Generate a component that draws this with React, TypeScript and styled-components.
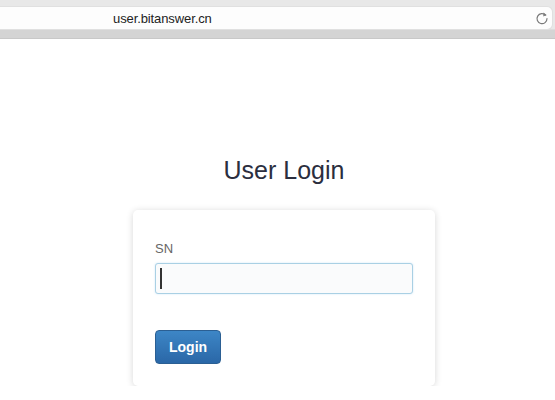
import React, { FC } from 'react'
import styled, { createGlobalStyle } from 'styled-components'

const GlobalStyle = createGlobalStyle`
    html, body {
        margin: 0;
        padding: 0;
        background: #ffffff;
        font-family: 'Liberation Sans', Arial, sans-serif;
    }
`

const Toolbar = styled.div`
    height: 29px;
    background: #e8e8e8;
    padding-top: 7px;
    box-sizing: border-box;
    display: flex;
`

const AddressField = styled.div`
    flex: 1;
    height: 22px;
    margin-left: -10px;
    margin-right: 3px;
    background: #fdfdfd;
    border-radius: 5px;
    box-shadow: 0 0 0 1px #e0e0e0;
    display: flex;
    align-items: center;
    position: relative;

    .url {
        margin-left: 123px;
        font-size: 13px;
        color: #222;
        letter-spacing: -0.1px;
    }

    svg {
        margin-left: auto;
        margin-right: 3px;
    }
`

const TabStrip = styled.div`
    height: 8px;
    background: #d4d4d4;
    border-top: 1px solid #dcdcdc;
    border-bottom: 1px solid #c8c8c8;
`

const Main = styled.main`
    display: flex;
    flex-direction: column;
    align-items: center;
    padding-left: 13px;
    padding-top: 116px;
`

const Title = styled.h1`
    margin: 0;
    font-size: 25px;
    line-height: 30px;
    font-weight: normal;
    color: #2b2e3e;
`

const Card = styled.div`
    margin-top: 25px;
    width: 302px;
    box-sizing: border-box;
    padding: 30px 22px 22px;
    background: #fff;
    border-radius: 5px;
    box-shadow: 0 1px 7px rgba(0, 0, 0, 0.16);
`

const Label = styled.label`
    display: block;
    font-size: 13px;
    line-height: 18px;
    color: #666;
`

const Field = styled.div`
    position: relative;
    margin-top: 5px;
`

const Input = styled.input`
    display: block;
    width: 100%;
    height: 31px;
    box-sizing: border-box;
    border: 1px solid #a9d0e4;
    border-radius: 3px;
    background: #fafbfc;
    box-shadow: 0 0 2px rgba(102, 175, 233, 0.35);
    outline: none;
    caret-color: transparent;
    padding: 0 6px;
`

const Caret = styled.span`
    position: absolute;
    left: 5px;
    top: 5px;
    width: 2px;
    height: 21px;
    background: #333;
`

const LoginButton = styled.button`
    margin-top: 36px;
    height: 34px;
    padding: 0 13px;
    border: 1px solid #2b5f93;
    border-radius: 4px;
    background: linear-gradient(to bottom, #3d86c6 0%, #2a67a7 100%);
    color: #fff;
    font-family: 'Liberation Sans', Arial, sans-serif;
    font-size: 14px;
    font-weight: bold;
    cursor: pointer;
`

const ReloadIcon: FC = () => (
    <svg width="14" height="14" viewBox="0 0 14 14" fill="none">
        <path d="M10.6 4.2A5 5 0 1 0 12 7.6" stroke="#7a7a7a" strokeWidth="1.2" strokeLinecap="round" />
        <path d="M8.4 1.6 L11.6 3.9 L8.3 5.4 Z" fill="#7a7a7a" />
    </svg>
)

const App: FC = () => {
    return (
        <>
            <GlobalStyle />
            <Toolbar>
                <AddressField>
                    <span className='url'>user.bitanswer.cn</span>
                    <ReloadIcon />
                </AddressField>
            </Toolbar>
            <TabStrip />
            <Main>
                <Title>User Login</Title>
                <Card>
                    <Label htmlFor='sn'>SN</Label>
                    <Field>
                        <Input id='sn' type='text' />
                        <Caret />
                    </Field>
                    <LoginButton>Login</LoginButton>
                </Card>
            </Main>
        </>
    )
}

export default App
